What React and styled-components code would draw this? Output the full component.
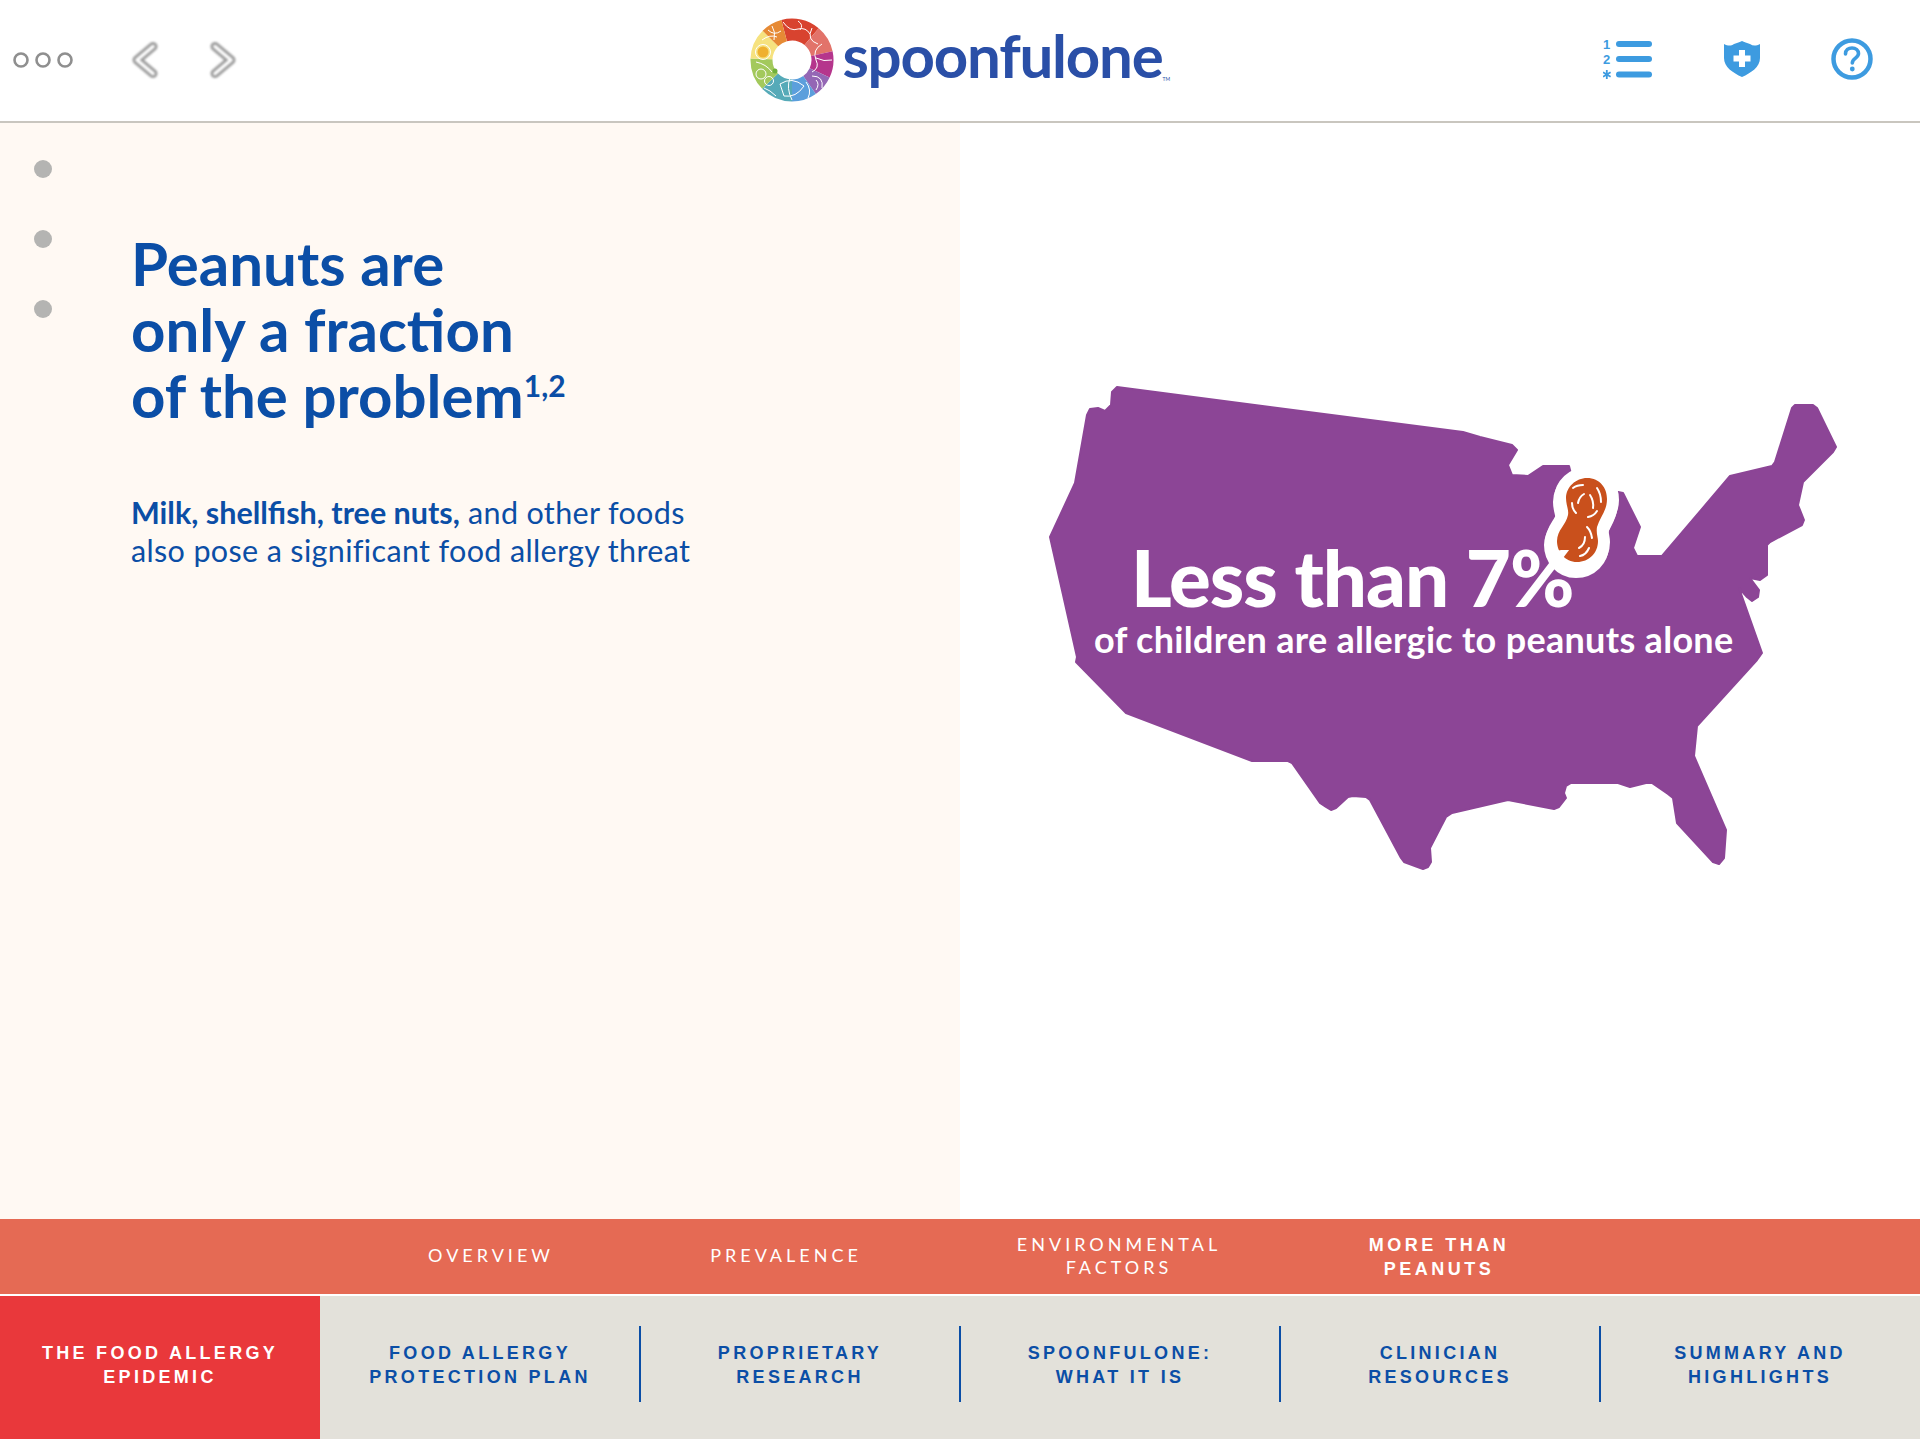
import React from 'react';
import styled, { createGlobalStyle } from 'styled-components';

const GlobalStyle = createGlobalStyle`
  html, body {
    margin: 0;
    padding: 0;
    background: #fff;
  }
  * {
    box-sizing: border-box;
  }
`;

const FONT = `Lato, "Open Sans", sans-serif`;
const NAV_FONT = `"Liberation Sans", Arial, sans-serif`;

// 로고 링 조각 (시계방향, 위쪽이 0도)
const LOGO_SEGMENTS = [
  { from: -15, to: 40, color: '#d8432f' },
  { from: 40, to: 78, color: '#e2736a' },
  { from: 78, to: 115, color: '#b5358c' },
  { from: 115, to: 145, color: '#9467b5' },
  { from: 145, to: 180, color: '#5b9fdc' },
  { from: 180, to: 226, color: '#56aab8' },
  { from: 226, to: 272, color: '#a3c95c' },
  { from: 272, to: 315, color: '#f6e27f' },
  { from: 315, to: 345, color: '#e68a35' },
];

const arcPath = (from, to, r) => {
  const point = (deg) => {
    const rad = ((deg - 90) * Math.PI) / 180;
    return `${(42 + r * Math.cos(rad)).toFixed(2)} ${(42 + r * Math.sin(rad)).toFixed(2)}`;
  };
  return `M${point(from)} A${r} ${r} 0 0 1 ${point(to)}`;
};

const SUB_ITEMS = [
  { label: ['OVERVIEW'], width: 250 },
  { label: ['PREVALENCE'], width: 340 },
  { label: ['ENVIRONMENTAL', 'FACTORS'], width: 326 },
  { label: ['MORE THAN', 'PEANUTS'], width: 314, active: true },
];

const MAIN_ITEMS = [
  { label: ['THE FOOD ALLERGY', 'EPIDEMIC'], active: true },
  { label: ['FOOD ALLERGY', 'PROTECTION PLAN'] },
  { label: ['PROPRIETARY', 'RESEARCH'] },
  { label: ['SPOONFULONE:', 'WHAT IT IS'] },
  { label: ['CLINICIAN', 'RESOURCES'] },
  { label: ['SUMMARY AND', 'HIGHLIGHTS'] },
];

const MAP_POINTS =
  '1117,387 1463,432 1480,437 1512,445 1517,450 1508,465 1512,475 1528,476 1543,466 1569,466 1575,490 1600,510 1610,500 1618,492 1623,493 1640,527 1633,548 1637,556 1662,556 1730,476 1772,466 1775,462 1792,408 1795,405 1813,405 1817,408 1836,447 1833,452 1803,482 1798,505 1804,520 1802,525 1770,542 1767,545 1767,575 1760,580 1750,578 1759,590 1758,597 1752,601 1747,597 1739,588 1762,653 1757,660 1697,726 1694,756 1726,830 1724,858 1719,864 1713,862 1677,823 1673,798 1668,794 1652,783 1646,783 1630,787 1618,783 1571,783 1566,786 1564,793 1566,798 1559,807 1554,809 1508,800 1452,813 1446,817 1430,848 1431,862 1428,867 1423,869 1404,862 1401,858 1370,800 1366,797 1353,796 1348,797 1336,808 1331,810 1326,807 1320,803 1292,763 1288,761 1252,761 1126,713 1076,662 1077,657 1050,537 1075,483 1087,415 1090,409 1098,408 1105,411 1111,405 1112,392';

const PEANUT =
  'M1587 478C1600 478 1607 488 1607 499C1607 511 1600 517 1597 527C1596 533 1598 537 1598 541C1598 553 1589 562 1577 562C1565 562 1557 552 1557 541C1557 530 1566 525 1568 515C1569 510 1566 505 1566 498C1566 487 1576 478 1587 478Z';

const PEANUT_MARKS = [
  'M1573 488Q1577 485 1583 485',
  'M1597 488Q1601 494 1601 502',
  'M1572 503Q1572 509 1576 513',
  'M1588 517Q1594 516 1597 511',
  'M1578 503Q1579 497 1584 494',
  'M1590 495Q1594 501 1593 508',
  'M1587 527Q1591 531 1592 538',
  'M1579 548Q1585 545 1585 537',
  'M1580 556Q1586 555 1589 548',
];

const LogoRing = () => (
  <svg width="84" height="84" viewBox="0 0 84 84">
    {LOGO_SEGMENTS.map((s) => (
      <path key={s.from} d={arcPath(s.from, s.to, 30.5)} fill="none" stroke={s.color} strokeWidth="22" />
    ))}
    <circle cx="13" cy="34" r="7.5" fill="none" stroke="#fff" strokeWidth="1" />
    <circle cx="13" cy="34" r="5.5" fill="#efb02f" />
    <path d="M12 22Q20 16 27 19M18 12Q24 18 31 13M24 22Q26 14 22 8" fill="none" stroke="#fff" strokeWidth="1" />
    <path d="M33 4Q40 14 48 11Q56 9 60 16M48 3Q54 7 50 12M62 10Q56 22 68 26" fill="none" stroke="#fff" strokeWidth="1" />
    <path d="M72 26Q62 32 66 42Q70 50 62 54M82 42Q74 44 66 40" fill="none" stroke="#fff" strokeWidth="1" />
    <path d="M62 58Q74 58 72 70M56 64Q62 72 58 80M66 62Q70 66 66 72" fill="none" stroke="#fff" strokeWidth="1" />
    <path d="M30 66Q42 58 54 68Q46 80 34 78ZM40 60Q36 70 42 82" fill="none" stroke="#fff" strokeWidth="1" />
    <circle cx="11" cy="56" r="5" fill="none" stroke="#fff" strokeWidth="1" />
    <circle cx="19" cy="63" r="4.5" fill="none" stroke="#fff" strokeWidth="1" />
    <circle cx="25" cy="53" r="2.5" fill="#6fb03a" />
    <path d="M6 44Q16 46 22 54M14 70Q20 72 26 78" fill="none" stroke="#fff" strokeWidth="1" />
  </svg>
);

const App = () => (
  <Page>
    <GlobalStyle />
    <Header>
      <HeaderLeft>
        <MenuDots width="62" height="20" viewBox="0 0 62 20">
          <circle cx="9" cy="10" r="6.5" />
          <circle cx="31" cy="10" r="6.5" />
          <circle cx="53" cy="10" r="6.5" />
        </MenuDots>
        <Chevron width="36" height="40" viewBox="0 0 36 40">
          <path d="M26 6.5L10 20L26 33.5" />
          <path className="inner" d="M26 6.5L10 20L26 33.5" />
        </Chevron>
        <Chevron width="36" height="40" viewBox="0 0 36 40">
          <path d="M6 6.5L22 20L6 33.5" />
          <path className="inner" d="M6 6.5L22 20L6 33.5" />
        </Chevron>
      </HeaderLeft>
      <Logo>
        <LogoRing />
        <LogoText>spoonfulone</LogoText>
        <LogoMark>TM</LogoMark>
      </Logo>
      <HeaderRight>
        <svg width="50" height="46" viewBox="0 0 50 46" fill="#3d9be0">
          <text x="0" y="13" fontFamily="Liberation Sans" fontWeight="700" fontSize="13">1</text>
          <text x="0" y="28" fontFamily="Liberation Sans" fontWeight="700" fontSize="13">2</text>
          <path d="M3.8 34V43M0 36.2L7.6 40.8M7.6 36.2L0 40.8" fill="none" stroke="#3d9be0" strokeWidth="1.8" />
          <rect x="13" y="5" width="36" height="6" rx="3" />
          <rect x="13" y="20" width="36" height="6" rx="3" />
          <rect x="13" y="35.5" width="36" height="6" rx="3" />
        </svg>
        <svg width="36" height="36" viewBox="0 0 36 36">
          <path d="M0 3C4 5 7 5 10 3C13 2 16 1 18 0C20 1 23 2 26 3C29 5 32 5 36 3V17C36 26 27 32 18 36C9 32 0 26 0 17Z" fill="#3d9be0" />
          <path d="M15 9H21V14.5H26.5V20.5H21V26H15V20.5H9.5V14.5H15Z" fill="#fff" />
        </svg>
        <svg width="42" height="42" viewBox="0 0 42 42" fill="none" stroke="#3d9be0">
          <circle cx="21" cy="21" r="18.5" strokeWidth="4.5" />
          <path d="M14.5 16C14.5 12 17.5 10 21 10C24.8 10 27.5 12.4 27.5 15.6C27.5 20 21.3 20.2 21.3 25" strokeWidth="3.6" strokeLinecap="round" />
          <circle cx="21.3" cy="31" r="2.4" fill="#3d9be0" stroke="none" />
        </svg>
      </HeaderRight>
    </Header>

    <Main>
      <LeftPanel>
        <SlideDots>
          <SlideDot />
          <SlideDot />
          <SlideDot />
        </SlideDots>
        <Copy>
          <Title>
            Peanuts are
            <br />
            only a fraction
            <br />
            of the problem<Refs>1,2</Refs>
          </Title>
          <Body>
            <strong>Milk, shellfish, tree nuts,</strong> and other foods
            <br />
            also pose a significant food allergy threat
          </Body>
        </Copy>
      </LeftPanel>
      <RightPanel>
        <MapBox>
          <svg width="790" height="490" viewBox="1050 385 790 490" style={{ overflow: 'visible' }}>
            <polygon points={MAP_POINTS} fill="#8c4596" stroke="#8c4596" strokeWidth="2" strokeLinejoin="round" />
            <path d={PEANUT} fill="#fff" stroke="#fff" strokeWidth="24" transform="translate(0 1)" />
            <path d={PEANUT} fill="#fff" stroke="#fff" strokeWidth="24" transform="translate(-1 4)" />
            <path d={PEANUT} fill="#c9501c" />
            {PEANUT_MARKS.map((d) => (
              <path key={d} d={d} fill="none" stroke="#fff" strokeWidth="2" strokeLinecap="round" />
            ))}
          </svg>
          <MapBig>Less than 7%</MapBig>
          <MapSmall>of children are allergic to peanuts alone</MapSmall>
        </MapBox>
      </RightPanel>
    </Main>

    <SubNav>
      {SUB_ITEMS.map((item) => (
        <SubItem key={item.label[0]} $width={item.width} $active={item.active}>
          {item.label.map((line) => (
            <span key={line}>{line}</span>
          ))}
        </SubItem>
      ))}
    </SubNav>

    <MainNav>
      {MAIN_ITEMS.map((item, i) => (
        <MainItem key={item.label[0]} $active={item.active} $divider={i > 1}>
          {item.label.map((line) => (
            <span key={line}>{line}</span>
          ))}
        </MainItem>
      ))}
    </MainNav>
  </Page>
);

const Page = styled.div`
  width: 1920px;
  height: 1440px;
  display: flex;
  flex-direction: column;
  overflow: hidden;
  font-family: ${FONT};
  background: #fff;
`;

const Header = styled.header`
  height: 123px;
  flex: none;
  display: grid;
  grid-template-columns: 1fr auto 1fr;
  align-items: center;
  border-bottom: 2px solid #c9c6bf;
`;

const HeaderLeft = styled.div`
  display: flex;
  align-items: center;
  gap: 46px;
  padding: 0 0 2px 12px;
`;

const MenuDots = styled.svg`
  margin-right: 7px;
  fill: none;
  stroke: #8f8f8f;
  stroke-width: 2.6;
  filter: blur(0.4px);
`;

const Chevron = styled.svg`
  fill: none;
  stroke-linecap: round;
  stroke-linejoin: round;
  stroke: #9c9c9c;
  stroke-width: 9;
  filter: blur(0.9px);

  .inner {
    stroke: #fff;
    stroke-width: 3.5;
  }
`;

const Logo = styled.div`
  display: flex;
  align-items: center;
  padding-bottom: 2px;
`;

const LogoText = styled.span`
  margin: 0 0 10px 8px;
  font-size: 60px;
  line-height: 64px;
  font-weight: 700;
  letter-spacing: -1.2px;
  color: #2a4fa7;
`;

const LogoMark = styled.span`
  align-self: flex-end;
  margin: 0 0 20px 0;
  width: 7px;
  font-size: 5px;
  color: #2a4fa7;
`;

const HeaderRight = styled.div`
  display: flex;
  align-items: center;
  justify-content: flex-end;
  gap: 71px;
  padding: 0 47px 4px 0;
`;

const Main = styled.main`
  flex: 1;
  display: grid;
  grid-template-columns: 960px 960px;
  min-height: 0;
`;

const LeftPanel = styled.section`
  display: flex;
  background: #fff9f3;
`;

const SlideDots = styled.div`
  width: 131px;
  flex: none;
  display: flex;
  flex-direction: column;
  gap: 52px;
  padding: 37px 0 0 34px;
`;

const SlideDot = styled.span`
  width: 18px;
  height: 18px;
  border-radius: 50%;
  background: #b4b4b2;
`;

const Copy = styled.div`
  padding-top: 107px;
  color: #0b4ea6;
`;

const Title = styled.h1`
  margin: 0;
  font-size: 60px;
  line-height: 66px;
  font-weight: 700;
`;

const Refs = styled.sup`
  font-size: 30px;
  line-height: 0;
  font-weight: 700;
  vertical-align: baseline;
  position: relative;
  top: -21px;
`;

const Body = styled.p`
  margin: 65px 0 0;
  font-size: 30.5px;
  line-height: 38px;
  font-weight: 400;
  letter-spacing: 0.35px;

  strong {
    font-weight: 700;
    letter-spacing: 0;
  }
`;

const RightPanel = styled.section`
  padding: 262px 0 0 90px;
  background: #fff;
`;

const MapBox = styled.div`
  position: relative;
  width: 790px;
  height: 490px;

  svg {
    display: block;
  }
`;

const MapBig = styled.div`
  position: absolute;
  left: 81px;
  top: 157px;
  font-size: 78px;
  line-height: 70px;
  font-weight: 900;
  letter-spacing: -1px;
  color: #fff;
  white-space: nowrap;
`;

const MapSmall = styled.div`
  position: absolute;
  left: 44px;
  top: 232px;
  font-size: 36px;
  line-height: 44px;
  font-weight: 700;
  letter-spacing: 0.3px;
  color: #fff;
  white-space: nowrap;
`;

const SubNav = styled.nav`
  height: 75px;
  flex: none;
  margin-bottom: 2px;
  padding-left: 366px;
  display: flex;
  background: #e56a54;
`;

const SubItem = styled.a`
  width: ${(p) => p.$width}px;
  display: flex;
  flex-direction: column;
  align-items: center;
  justify-content: center;
  padding-top: ${(p) => (p.$active ? '2px' : '0')};
  padding-bottom: ${(p) => (p.$active ? '0' : '1px')};
  font-family: ${(p) => (p.$active ? NAV_FONT : FONT)};
  font-size: 18px;
  line-height: 23.5px;
  font-weight: ${(p) => (p.$active ? 700 : 400)};
  letter-spacing: ${(p) => (p.$active ? '3.5px' : '4px')};
  color: #fff;
`;

const MainNav = styled.nav`
  height: 143px;
  flex: none;
  margin-bottom: 1px;
  display: grid;
  grid-template-columns: repeat(6, 1fr);
  background: #e3e1da;
`;

const MainItem = styled.a`
  position: relative;
  display: flex;
  flex-direction: column;
  align-items: center;
  justify-content: center;
  padding-bottom: 4px;
  font-family: ${NAV_FONT};
  font-size: 18px;
  line-height: 23.5px;
  font-weight: 700;
  letter-spacing: 3.3px;
  color: ${(p) => (p.$active ? '#fff' : '#0b4ea6')};
  background: ${(p) => (p.$active ? '#e9383b' : 'transparent')};

  &::before {
    content: '';
    display: ${(p) => (p.$divider ? 'block' : 'none')};
    position: absolute;
    left: -1px;
    top: 30px;
    width: 2px;
    height: 76px;
    background: #0b4ea6;
  }
`;

export default App;
